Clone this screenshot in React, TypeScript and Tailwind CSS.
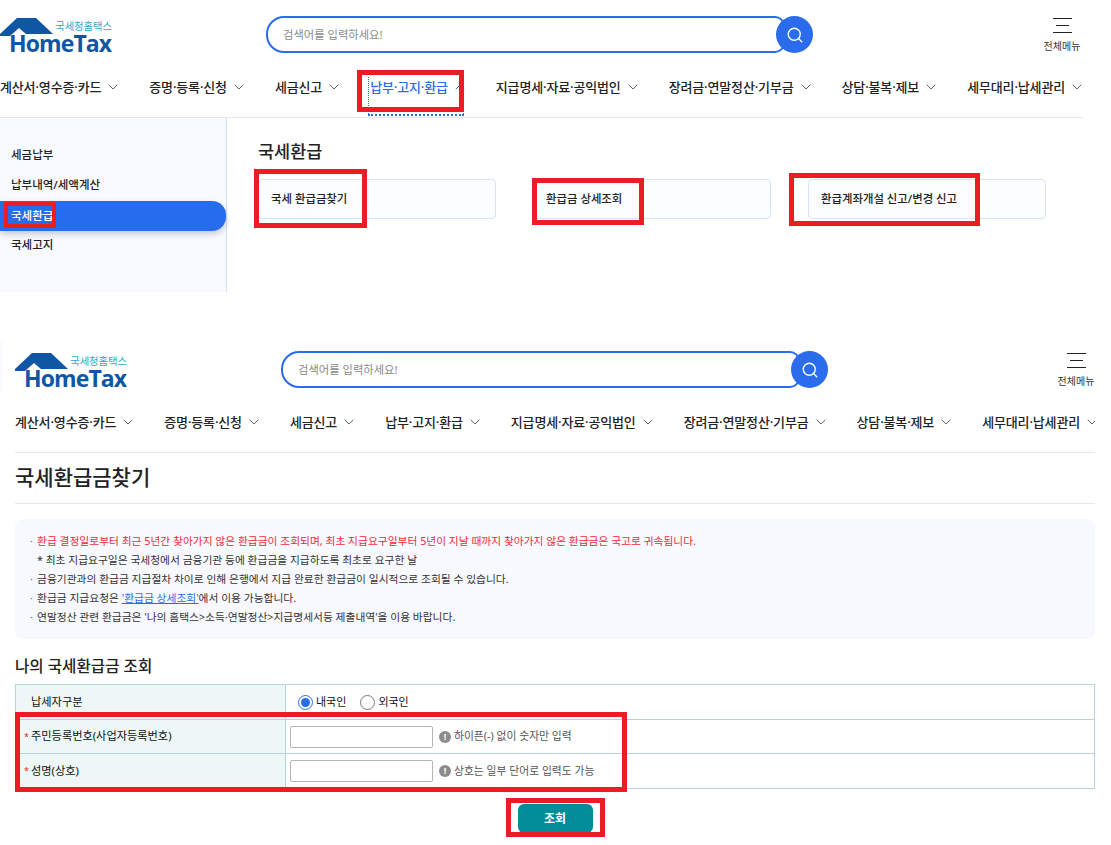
import React from 'react';
import { ChevronDown, ChevronUp, Search } from 'lucide-react';

const navItems = [
  '계산서·영수증·카드',
  '증명·등록·신청',
  '세금신고',
  '납부·고지·환급',
  '지급명세·자료·공익법인',
  '장려금·연말정산·기부금',
  '상담·불복·제보',
  '세무대리·납세관리',
];

const sideItems = ['세금납부', '납부내역/세액계산', '국세환급', '국세고지'];
const refundCards = ['국세 환급금찾기', '환급금 상세조회', '환급계좌개설 신고/변경 신고'];

function Logo() {
  return (
    <div className="relative w-[112px] h-[36px] shrink-0">
      <svg width="54" height="19" viewBox="0 0 54 19" className="absolute left-0 top-0">
        <path d="M0 16L17 0H36L53 16H26L19 10L10 18H0Z" fill="#0f56a4" />
      </svg>
      <span className="absolute right-0 top-[1px] text-[10.3px] leading-[14px] text-[#2fa9c4]">국세청홈택스</span>
      <span className="absolute left-[9px] top-[17px] text-[23px] leading-[17px] font-bold tracking-[-0.9px] text-[#0f56a4] font-['Open_Sans','Liberation_Sans',sans-serif]">
        HomeTax
      </span>
    </div>
  );
}

function Header({ active, className }: { active?: string; className: string }) {
  return (
    <header className={`h-[118px] border-b border-[#e6e8ec] overflow-hidden shrink-0 ${className}`}>
      <div className="h-[69px] flex items-start">
        <div className="pt-[18px]">
          <Logo />
        </div>
        <div className="ml-[154px] mt-[16px] flex items-center">
          <div className="w-[519px] h-[37px] border-2 border-[#2a6cec] rounded-l-[18px] rounded-r-[10px] flex items-center pl-[15px] pt-[1px] text-[11.3px] text-[#8a8a8a]">
            검색어를 입력하세요!
          </div>
          <button className="w-[37px] h-[37px] -ml-[9px] rounded-full bg-[#2a6cec] flex items-center justify-center text-white">
            <Search size={18} strokeWidth={1.8} />
          </button>
        </div>
        <div className="ml-[229px] mt-[18px] w-[40px] flex flex-col items-center">
          <div className="w-[19px] h-[15px] flex flex-col justify-between items-start">
            <span className="w-[19px] h-px bg-[#222]"></span>
            <span className="w-[13px] h-px bg-[#222] self-center"></span>
            <span className="w-[19px] h-px bg-[#222]"></span>
          </div>
          <span className="mt-[7px] text-[10px] leading-[12px] whitespace-nowrap text-[#333]">전체메뉴</span>
        </div>
      </div>
      <nav className="flex h-[48px] gap-[28px] whitespace-nowrap">
        {navItems.map((item) => {
          const on = item === active;
          return (
            <a
              key={item}
              className={`relative flex items-start pt-[8px] gap-[4px] text-[13px] leading-[20px] tracking-[-0.15px] font-medium shrink-0 ${on ? 'text-[#2a6cec]' : 'text-[#222]'}`}
            >
              {on && (
                <span className="absolute -left-[2px] right-[4px] top-[8px] bottom-[1px] border border-dotted border-[#2a6cec] border-t-0 border-b-[2px] border-b-[#2a6cec]"></span>
              )}
              {item}
              {on ? (
                <ChevronUp size={16} strokeWidth={1.5} className="mt-[2px] text-[#2a6cec]" />
              ) : (
                <ChevronDown size={16} strokeWidth={1.5} className="mt-[2px] text-[#666]" />
              )}
            </a>
          );
        })}
      </nav>
    </header>
  );
}

function Mark({ className }: { className: string }) {
  return <div className={`absolute border-[#ed1c24] pointer-events-none ${className}`}></div>;
}

function Hint({ text }: { text: string }) {
  return (
    <span className="flex items-center gap-[3px] ml-[6px] text-[10.8px] text-[#555]">
      <span className="w-[12px] h-[12px] rounded-full bg-[#8c8c8c] text-white text-[9px] leading-[12px] font-bold text-center">!</span>
      {text}
    </span>
  );
}

function FormRow({ label, hint, className }: { label: string; hint: string; className: string }) {
  return (
    <div className={`flex border-t border-[#b4d6da] ${className}`}>
      <div className="w-[270px] bg-[#edf7f6] border-r border-[#b4d6da] flex items-center pl-[8px] text-[11.2px] text-[#111]">
        <span className="w-[7px] text-[#ed1c24] text-[9px]">*</span>
        {label}
      </div>
      <div className="flex items-center pl-[4px]">
        <input className="w-[143px] h-[22px] border border-[#b5b5b5] rounded-[2px] bg-white" />
        <Hint text={hint} />
      </div>
    </div>
  );
}

export default function App() {
  return (
    <div className="relative w-[1111px] h-[845px] overflow-hidden bg-white text-[#222] font-['Noto_Sans','Noto_Sans_CJK_KR',sans-serif]">
      {/* first capture: menu */}
      <Header active="납부·고지·환급" className="w-[1083px]" />
      <div className="flex h-[174px]">
        <aside className="w-[227px] bg-[#f8faff] border-r border-[#cfe0ff] pt-[22px]">
          {sideItems.map((item) => (
            <div
              key={item}
              className={`h-[30px] flex items-center pl-[11px] text-[11.5px] font-medium ${
                item === '국세환급'
                  ? 'w-[226px] translate-y-px bg-[#256cee] text-white rounded-r-[14px] shadow-[0_3px_6px_rgba(0,0,0,0.2)]'
                  : 'text-[#222]'
              }`}
            >
              {item}
            </div>
          ))}
        </aside>
        <section className="pl-[31px] pt-[21px]">
          <h2 className="text-[17.5px] leading-[24px] font-medium text-[#222]">국세환급</h2>
          <div className="flex gap-[37px] mt-[16px]">
            {refundCards.map((card) => (
              <div
                key={card}
                className="w-[238px] h-[40px] border border-[#d5e3fb] rounded-[4px] bg-[#fcfdff] flex items-center pl-[12px] text-[11.4px] font-medium text-[#222]"
              >
                {card}
              </div>
            ))}
          </div>
        </section>
      </div>

      {/* second capture: refund lookup */}
      <div className="mt-[43px]">
        <Header className="ml-[15px] w-[1080px]" />
        <main className="ml-[15px] w-[1080px]">
          <h1 className="h-[51px] border-b border-[#e6e8ec] text-[21px] leading-[48px] font-medium text-[#222]">국세환급금찾기</h1>
          <div className="mt-[15px] h-[120px] bg-[#f8f9fe] rounded-lg pt-[13px] pl-[15px] text-[10.75px] leading-[19px] text-[#333]">
            <p className="text-[#ee2b3b]"><span className="inline-block w-[7px] text-[#777]">·</span>환급 결정일로부터 최근 5년간 찾아가지 않은 환급금이 조회되며, 최초 지급요구일부터 5년이 지날 때까지 찾아가지 않은 환급금은 국고로 귀속됩니다.</p>
            <p className="pl-[7px]">* 최초 지급요구일은 국세청에서 금융기관 등에 환급금을 지급하도록 최초로 요구한 날</p>
            <p><span className="inline-block w-[7px] text-[#777]">·</span>금융기관과의 환급금 지급절차 차이로 인해 은행에서 지급 완료한 환급금이 일시적으로 조회될 수 있습니다.</p>
            <p><span className="inline-block w-[7px] text-[#777]">·</span>환급금 지급요청은 <span className="text-[#2a6cec] underline">'환급금 상세조회'</span>에서 이용 가능합니다.</p>
            <p><span className="inline-block w-[7px] text-[#777]">·</span>연말정산 관련 환급금은 '나의 홈택스&gt;소득·연말정산&gt;지급명세서등 제출내역'을 이용 바랍니다.</p>
          </div>
          <h3 className="mt-[16px] text-[15.6px] leading-[22px] font-medium text-[#222]">나의 국세환급금 조회</h3>
          <div className="mt-[7px] border border-[#b4d6da]">
            <div className="flex h-[34px]">
              <div className="w-[270px] bg-[#edf7f6] border-r border-[#b4d6da] flex items-center pl-[15px] text-[11.2px] text-[#111]">납세자구분</div>
              <div className="flex items-center pl-[12px] text-[11px] text-[#111]">
                <span className="w-[15px] h-[15px] rounded-full border border-[#2a6cec] flex items-center justify-center">
                  <span className="w-[9px] h-[9px] rounded-full bg-[#2a6cec]"></span>
                </span>
                <span className="ml-[3px]">내국인</span>
                <span className="ml-[14px] w-[15px] h-[15px] rounded-full border border-[#777] bg-white"></span>
                <span className="ml-[3px]">외국인</span>
              </div>
            </div>
            <FormRow label="주민등록번호(사업자등록번호)" hint="하이픈(-) 없이 숫자만 입력" className="h-[34px]" />
            <FormRow label="성명(상호)" hint="상호는 일부 단어로 입력도 가능" className="h-[35px]" />
          </div>
          <div className="flex justify-center mt-[15px]">
            <button className="w-[75px] h-[29px] rounded-[6px] bg-[#008c99] text-white text-[12px] font-bold">조회</button>
          </div>
        </main>
      </div>

      {/* sliver left over from the cropped capture */}
      <div className="absolute left-0 top-[340px] w-[3px] h-[52px] bg-[#f8faff]"></div>

      {/* red annotation boxes */}
      <Mark className="left-[357px] top-[70px] w-[107px] h-[42px] border-[5px]" />
      <Mark className="left-[4px] top-[202px] w-[52px] h-[26px] border-[4px]" />
      <Mark className="left-[254px] top-[169px] w-[113px] h-[59px] border-[5px]" />
      <Mark className="left-[532px] top-[178px] w-[112px] h-[47px] border-[5px]" />
      <Mark className="left-[789px] top-[173px] w-[191px] h-[53px] border-[5px]" />
      <Mark className="left-[15px] top-[712px] w-[612px] h-[80px] border-[5px]" />
      <Mark className="left-[506px] top-[798px] w-[99px] h-[39px] border-[5px]" />
    </div>
  );
}
